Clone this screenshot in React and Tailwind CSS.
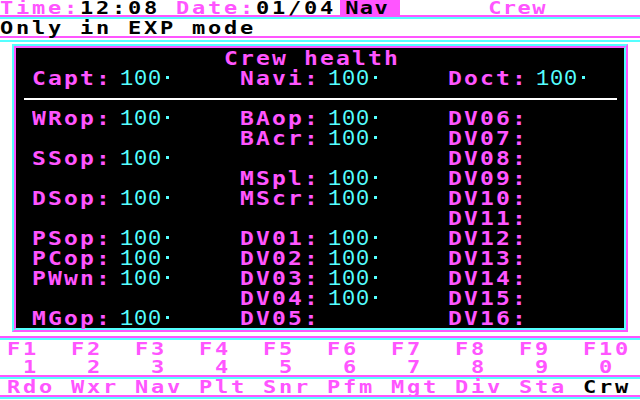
const ROWS = [
  [{ l: "WRop", v: true }, { l: "BAop", v: true }, { l: "DV06" }],
  [null, { l: "BAcr", v: true }, { l: "DV07" }],
  [{ l: "SSop", v: true }, null, { l: "DV08" }],
  [null, { l: "MSpl", v: true }, { l: "DV09" }],
  [{ l: "DSop", v: true }, { l: "MScr", v: true }, { l: "DV10" }],
  [null, null, { l: "DV11" }],
  [{ l: "PSop", v: true }, { l: "DV01", v: true }, { l: "DV12" }],
  [{ l: "PCop", v: true }, { l: "DV02", v: true }, { l: "DV13" }],
  [{ l: "PWwn", v: true }, { l: "DV03", v: true }, { l: "DV14" }],
  [null, { l: "DV04", v: true }, { l: "DV15" }],
  [{ l: "MGop", v: true }, { l: "DV05" }, { l: "DV16" }],
];

const KEYS = [
  ["F1", "1", "Rdo"],
  ["F2", "2", "Wxr"],
  ["F3", "3", "Nav"],
  ["F4", "4", "Plt"],
  ["F5", "5", "Snr"],
  ["F6", "6", "Pfm"],
  ["F7", "7", "Mgt"],
  ["F8", "8", "Div"],
  ["F9", "9", "Sta"],
  ["F10", "0", "Crw"],
];

// CGA text is 16px per cell; glyphs squashed vertically to match the 8x8 font look
const SQUASH = "inline-block scale-y-[0.82]";

function Lines({ gap }) {
  return (
    <>
      <div className="h-[2px] bg-[#ff55ff]" />
      {gap && <div className="h-[2px]" />}
      <div className="h-[2px] bg-[#55ffff]" />
    </>
  );
}

function Cell({ cell }) {
  if (!cell) return <div />;
  return (
    <div className="flex h-[20px] items-baseline">
      <span className="w-[88px] scale-y-[0.87] text-[#ff55ff]">{cell.l}:</span>
      {cell.v && (
        <>
          <span className="-translate-y-px font-['Liberation_Mono'] text-[22px] font-normal tracking-[0.8px] text-[#55ffff]">100</span>
          <span className="ml-[4px] mt-[8px] h-[3px] w-[3px] self-start bg-[#55ffff]" />
        </>
      )}
    </div>
  );
}

export default function App() {
  return (
    <div className="flex h-[400px] w-[640px] flex-col overflow-hidden bg-white font-['DejaVu_Sans_Mono'] font-bold">
      {/* status bar */}
      <div className="flex h-[15px] items-start text-[22px] leading-[15px] tracking-[2.76px]">
        <span className={`${SQUASH} text-[#ff55ff]`}>Time:</span>
        <span className={`${SQUASH} text-black`}>12:08</span>
        <span className={`${SQUASH} pl-[16px] text-[#ff55ff]`}>Date:</span>
        <span className={`${SQUASH} text-black`}>01/04</span>
        <span className="ml-[4px] h-[15px] w-[60px] bg-[#ff55ff] pl-[5px] text-black">
          <span className={`${SQUASH} tracking-[1.5px]`}>Nav</span>
        </span>
        <span className={`${SQUASH} ml-[88px] tracking-[1.5px] text-[#ff55ff]`}>Crew</span>
      </div>
      <Lines />
      <div className="h-[17px] text-[22px] leading-[17px] tracking-[2.76px] text-black">
        <span className={SQUASH}>Only in EXP mode</span>
      </div>
      <Lines gap />
      <div className="h-[2px]" />

      {/* crew health panel */}
      <div className="mx-[12px] border-2 border-b-[#ff55ff] border-l-[#55ffff] border-r-[#ff55ff] border-t-[#55ffff]">
        <div className="h-[284px] border-2 border-b-[#55ffff] border-l-[#ff55ff] border-r-[#55ffff] border-t-[#ff55ff] bg-black text-[23px] leading-[20px] tracking-[2.15px]">
          <div className="h-[20px] scale-y-[0.87] pl-[208px] text-[#ff55ff]">Crew health</div>
          <div className="grid grid-cols-[208px_208px_192px] pl-[16px]">
            <Cell cell={{ l: "Capt", v: true }} />
            <Cell cell={{ l: "Navi", v: true }} />
            <Cell cell={{ l: "Doct", v: true }} />
          </div>
          <div className="ml-[8px] mr-[7px] mt-[10px] h-[2px] bg-white" />
          <div className="mt-[8px] grid grid-cols-[208px_208px_192px] pl-[16px]">
            {ROWS.map((row, i) =>
              row.map((cell, j) => <Cell key={`${i}-${j}`} cell={cell} />)
            )}
          </div>
        </div>
      </div>

      {/* function keys */}
      <div className="h-[4px]" />
      <Lines />
      <div className="grid grid-cols-10 text-[22px] tracking-[2.76px] text-[#ff55ff]">
        {KEYS.map(([f, n]) => (
          <div key={f} className="pl-[7px]">
            <div className="h-[18px] scale-y-[0.82] leading-[18px]">{f}</div>
            <div className="h-[17px] scale-y-[0.82] pl-[16px] leading-[17px]">{n}</div>
          </div>
        ))}
      </div>
      <Lines />
      <div className="grid h-[16px] grid-cols-10 text-[22px] leading-[16px] tracking-[2.76px]">
        {KEYS.map(([f, , l]) => (
          <div
            key={f}
            className={f === "F10" ? "scale-y-[0.82] pl-[7px] text-black" : "scale-y-[0.82] pl-[7px] text-[#ff55ff]"}
          >
            {l}
          </div>
        ))}
      </div>
      <Lines />
    </div>
  );
}
